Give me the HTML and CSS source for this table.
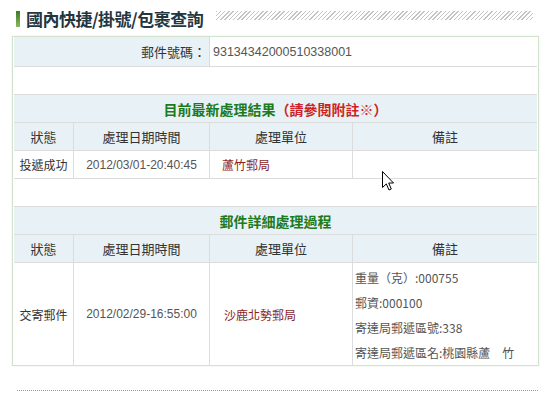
FILE: index.html
```html
<!DOCTYPE html>
<html lang="zh-Hant">
<head>
<meta charset="utf-8">
<title>國內快捷/掛號/包裹查詢</title>
<link rel="stylesheet" href="styles.css">
</head>
<body>
<header class="title-bar">
  <span class="title-mark"></span>
  <h1 class="title">國內快捷/掛號/包裹查詢</h1>
  <span class="hatch"></span>
</header>

<div class="box">
  <table class="result">
    <colgroup>
      <col class="c1"><col class="c2"><col class="c3"><col class="c4">
    </colgroup>
    <tr class="row-first">
      <td colspan="2" class="label">郵件號碼：</td>
      <td colspan="2" class="value">93134342000510338001</td>
    </tr>
    <tr class="row-gap"><td colspan="4"></td></tr>
    <tr class="row-head">
      <td colspan="4">目前最新處理結果<span class="note">（請參閱附註※）</span></td>
    </tr>
    <tr class="row-cols">
      <td>狀態</td><td>處理日期時間</td><td>處理單位</td><td class="last">備註</td>
    </tr>
    <tr class="row-data">
      <td class="status">投遞成功</td>
      <td class="date">2012/03/01-20:40:45</td>
      <td class="office">蘆竹郵局</td>
      <td class="last"></td>
    </tr>
    <tr class="row-gap"><td colspan="4"></td></tr>
    <tr class="row-head">
      <td colspan="4">郵件詳細處理過程</td>
    </tr>
    <tr class="row-cols">
      <td>狀態</td><td>處理日期時間</td><td>處理單位</td><td class="last">備註</td>
    </tr>
    <tr class="row-data row-detail">
      <td class="status">交寄郵件</td>
      <td class="date">2012/02/29-16:55:00</td>
      <td class="office">沙鹿北勢郵局</td>
      <td class="last remarks">
        <div>重量（克）:000755</div>
        <div>郵資:000100</div>
        <div>寄達局郵遞區號:338</div>
        <div>寄達局郵遞區名:桃園縣蘆　竹</div>
      </td>
    </tr>
  </table>
</div>

<div class="dotted"></div>

<svg class="cursor" width="13" height="20" viewBox="0 0 13 20" aria-hidden="true">
  <path d="M0.5 0.5 L0.5 16.5 L4.3 12.9 L7 19 L9.3 18 L6.7 12 L11.5 12 Z" fill="#fff" stroke="#000" stroke-width="1" stroke-linejoin="miter"/>
</svg>
</body>
</html>
```

FILE: styles.css
```css
html, body {
  margin: 0;
  padding: 0;
  background: #fff;
}

body {
  position: relative;
  width: 550px;
  height: 397px;
  overflow: hidden;
  font-family: "Liberation Sans", "Noto Sans CJK TC", sans-serif;
  color: #333;
}

.title-bar {
  display: flex;
  align-items: flex-start;
  height: 17px;
  padding: 11px 17px 0 16px;
}

.title-mark {
  width: 4px;
  height: 16px;
  background: linear-gradient(#3f7a22, #8cb864);
  flex: none;
}

.title {
  margin: -2px 0 0 6px;
  font-family: "Noto Sans CJK TC", sans-serif;
  font-size: 17px;
  letter-spacing: -0.5px;
  line-height: 20px;
  font-weight: 700;
  color: #233640;
  white-space: nowrap;
}

.hatch {
  flex: 1;
  height: 9px;
  margin-left: 13px;
  background: repeating-linear-gradient(135deg, #c4c4c4 0 1px, #fff 1px 3px);
}

.box {
  margin: 8px 11px 0 12px;
  border: 1px solid #d2e3cd;
  box-shadow: 0 0 2px #e4f1e0;
  padding: 0 1px;
}

.result {
  width: 523px;
  border-collapse: separate;
  border-spacing: 0;
  table-layout: fixed;
  font-size: 12px;
}

.c1 { width: 60px; }
.c2 { width: 136px; }
.c3 { width: 143px; }
.c4 { width: 184px; }

.result td {
  box-sizing: border-box;
  height: 28px;
  padding: 0;
  border-bottom: 1px solid #dcdcdc;
  border-right: 1px solid #dcdcdc;
  text-align: center;
  vertical-align: middle;
  font-family: "Noto Sans CJK TC", sans-serif;
}

.result td.last,
.result td[colspan="4"] {
  border-right: none;
}

.row-first td {
  height: 30px;
  font-size: 13px;
}

.row-first .label {
  background: #e7f1f6;
  text-align: right;
  padding-right: 3px;
  color: #333;
}

.row-first .value {
  text-align: left;
  padding-left: 3px;
  border-right: none;
  color: #555;
  font-family: "Liberation Sans", sans-serif;
  font-size: 12.5px;
}

.row-head td {
  background: #e7f1f6;
  color: #1d7a1d;
  font-weight: 700;
  font-size: 14px;
}

.row-head .note {
  color: #cf2323;
}

.row-cols td {
  background: #e7f1f6;
  font-size: 13px;
  color: #333;
}

.row-data .status {
  color: #333;
}

.row-data .date {
  color: #555;
  font-family: "Liberation Sans", sans-serif;
}

.row-data .office {
  text-align: left;
  padding-left: 12px;
  color: #8e1f1f;
}

.row-detail td {
  height: 102px;
  border-bottom: none;
}

.row-detail .office {
  padding-left: 14px;
}

.remarks {
  text-align: left !important;
  padding: 2px 0 0 2px !important;
  color: #555;
  vertical-align: top !important;
}

.remarks div {
  line-height: 25px;
  font-size: 12px;
  white-space: nowrap;
}

.dotted {
  margin: 24px 12px 0 17px;
  border-top: 1px dotted #9a9a9a;
}

.cursor {
  position: absolute;
  left: 382px;
  top: 171px;
}
```
